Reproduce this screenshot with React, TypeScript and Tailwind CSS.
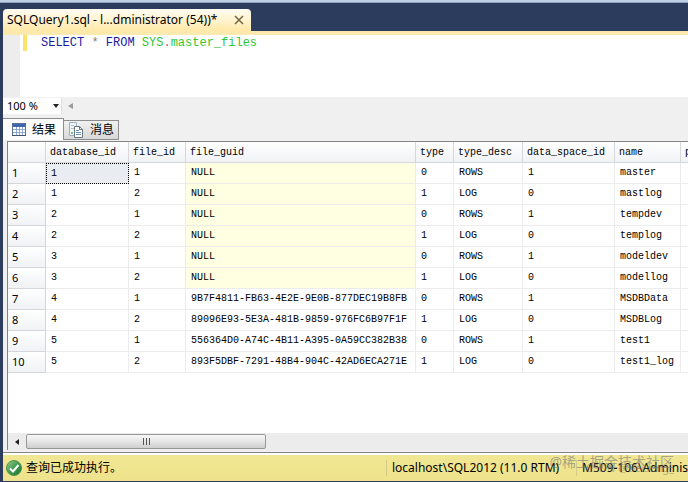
import React, { useState } from 'react';

interface FileRow {
  databaseId: number;
  fileId: number;
  guid: string | null;
  type: number;
  typeDesc: string;
  dataSpaceId: number;
  name: string;
}

const rows: FileRow[] = [
  { databaseId: 1, fileId: 1, guid: null, type: 0, typeDesc: 'ROWS', dataSpaceId: 1, name: 'master' },
  { databaseId: 1, fileId: 2, guid: null, type: 1, typeDesc: 'LOG', dataSpaceId: 0, name: 'mastlog' },
  { databaseId: 2, fileId: 1, guid: null, type: 0, typeDesc: 'ROWS', dataSpaceId: 1, name: 'tempdev' },
  { databaseId: 2, fileId: 2, guid: null, type: 1, typeDesc: 'LOG', dataSpaceId: 0, name: 'templog' },
  { databaseId: 3, fileId: 1, guid: null, type: 0, typeDesc: 'ROWS', dataSpaceId: 1, name: 'modeldev' },
  { databaseId: 3, fileId: 2, guid: null, type: 1, typeDesc: 'LOG', dataSpaceId: 0, name: 'modellog' },
  { databaseId: 4, fileId: 1, guid: '9B7F4811-FB63-4E2E-9E0B-877DEC19B8FB', type: 0, typeDesc: 'ROWS', dataSpaceId: 1, name: 'MSDBData' },
  { databaseId: 4, fileId: 2, guid: '89096E93-5E3A-481B-9859-976FC6B97F1F', type: 1, typeDesc: 'LOG', dataSpaceId: 0, name: 'MSDBLog' },
  { databaseId: 5, fileId: 1, guid: '556364D0-A74C-4B11-A395-0A59CC382B38', type: 0, typeDesc: 'ROWS', dataSpaceId: 1, name: 'test1' },
  { databaseId: 5, fileId: 2, guid: '893F5DBF-7291-48B4-904C-42AD6ECA271E', type: 1, typeDesc: 'LOG', dataSpaceId: 0, name: 'test1_log' },
];

const columns = [
  { label: 'database_id', width: 'w-[83px]' },
  { label: 'file_id', width: 'w-[57px]' },
  { label: 'file_guid', width: 'w-[230px]' },
  { label: 'type', width: 'w-[38px]' },
  { label: 'type_desc', width: 'w-[69px]' },
  { label: 'data_space_id', width: 'w-[92px]' },
  { label: 'name', width: 'w-[66px]' },
  { label: 'physical_name', width: 'w-[240px]' },
];

const cell = 'border-r border-b border-[#ececec] p-0 pl-[5px]';

const GridIcon = () => (
  <svg width="14" height="14" viewBox="0 0 14 14" aria-hidden="true">
    <rect x="0.5" y="0.5" width="13" height="12" fill="#fff" stroke="#5b7292" />
    <rect x="1" y="1" width="12" height="3" fill="#3c66b4" />
    <path d="M1 6.5h12M1 9.5h12M4.5 4v8M7.5 4v8M10.5 4v8" stroke="#8fa6cd" />
    <path d="M0 12.5h14" stroke="#3d5479" />
  </svg>
);

const MessagesIcon = () => (
  <svg width="15" height="16" viewBox="0 0 15 16" aria-hidden="true">
    <path d="M0.5 0.5h7v13h-7z" fill="#eef3f5" stroke="#9fb0bc" />
    <path d="M2 3.5h3M2 6.5h3" stroke="#a9bcc8" />
    <circle cx="3" cy="11" r="1" fill="#64a36e" />
    <path d="M5.5 4.5h5l3 3v8h-8z" fill="#fff" stroke="#68757f" />
    <path d="M10.5 4.5v3h3" fill="none" stroke="#68757f" />
    <path d="M7 8.5h3M7 10.5h5M7 12.5h5" stroke="#6e94b4" />
  </svg>
);

const SuccessIcon = () => (
  <svg width="16" height="16" viewBox="0 0 16 16" aria-hidden="true">
    <defs>
      <linearGradient id="ok" x1="0" y1="0" x2="1" y2="1">
        <stop offset="0" stopColor="#a3cfa0" />
        <stop offset="0.5" stopColor="#409a49" />
        <stop offset="1" stopColor="#1d7431" />
      </linearGradient>
    </defs>
    <circle cx="8" cy="8" r="7.5" fill="url(#ok)" stroke="#4e9358" />
    <path d="M4 8.5l3 3 5.5-6.5" fill="none" stroke="#fff" strokeWidth="2" />
  </svg>
);

export default function App() {
  const [query, setQuery] = useState('SELECT * FROM SYS.master_files');
  const [tab, setTab] = useState<'results' | 'messages'>('results');

  return (
    <div className="flex h-screen flex-col overflow-hidden bg-[#2c3c5c] font-['Noto_Sans','Noto_Sans_CJK_SC',sans-serif] text-xs text-black">
      <div className="h-[3px] shrink-0 border-b border-[#8da2b8] bg-[#bdd0e6]" />

      <div className="flex h-7 shrink-0 items-end pl-[3px]">
        <div className="flex h-[22px] w-[248px] items-center justify-between rounded-t-sm bg-linear-to-b from-[#fffcf2] via-[#fff3cf] to-[#ffe8a6] pr-[6px] pl-1">
          <span className="whitespace-nowrap">SQLQuery1.sql - l...dministrator (54))*</span>
          <button type="button" aria-label="Close" className="flex items-center">
            <svg width="12" height="10" viewBox="0 0 12 10">
              <path d="M2 1l8 8M10 1l-8 8" stroke="#75643f" strokeWidth="1.5" />
            </svg>
          </button>
        </div>
      </div>

      <div className="ml-[3px] flex min-h-0 flex-1 flex-col bg-[#f0f0f0]">
        <div className="h-1 shrink-0 bg-[#fbe9ae]" />

        <div className="flex h-[62px] shrink-0 bg-white">
          <div className="w-[17px] bg-[#ededed]" />
          <div className="ml-[3px] h-4 w-1 bg-[#f9e36a]" />
          <div className="relative ml-[14px] h-4 flex-1 font-['Liberation_Mono',monospace] text-xs leading-4">
            <div aria-hidden="true" className="whitespace-pre">
              <span className="text-[#1a1a9c]">SELECT</span>
              <span className="text-[#808080]"> * </span>
              <span className="text-[#1a1a9c]">FROM</span>
              <span className="text-[#35c535]"> SYS</span>
              <span className="text-[#808080]">.</span>
              <span className="text-[#35c535]">master_files</span>
            </div>
            <input
              aria-label="Query"
              value={query}
              spellCheck={false}
              onChange={(e) => setQuery(e.target.value)}
              className="absolute inset-0 w-full bg-transparent text-transparent caret-black outline-none"
            />
          </div>
        </div>

        <div className="flex h-[17px] shrink-0 items-center">
          <div className="relative h-4 w-[59px] border-r border-[#dedede] bg-white">
            <select aria-label="Zoom" className="h-4 w-full appearance-none pl-1 text-[11px] leading-4 outline-none">
              <option>100 %</option>
              <option>150 %</option>
            </select>
            <svg className="pointer-events-none absolute top-[6px] right-[2px]" width="6" height="4" viewBox="0 0 6 4">
              <path d="M0 0h6L3 4z" fill="#222" />
            </svg>
          </div>
          <button type="button" aria-label="Scroll editor left" className="ml-[6px]">
            <svg width="5" height="6" viewBox="0 0 5 6">
              <path d="M5 0v6L0 3z" fill="#9a9a9a" />
            </svg>
          </button>
        </div>

        <div role="tablist" className="mt-1 flex h-[22px] shrink-0 items-end">
          <button
            type="button"
            role="tab"
            aria-selected={tab === 'results'}
            onClick={() => setTab('results')}
            className="flex h-[22px] w-[61px] items-center gap-[6px] border-t border-r border-[#8d8d8d] bg-[#fbfbfb] pl-[9px] whitespace-nowrap"
          >
            <GridIcon />
            结果
          </button>
          <button
            type="button"
            role="tab"
            aria-selected={tab === 'messages'}
            onClick={() => setTab('messages')}
            className="flex h-5 w-[55px] items-center gap-[6px] border-t border-r border-b border-[#8d8d8d] bg-linear-to-b from-[#f1f1f1] to-[#d8d8d8] pl-[5px] whitespace-nowrap"
          >
            <MessagesIcon />
            消息
          </button>
        </div>

        <div className="mt-px ml-1 flex min-h-0 flex-1 flex-col border-t border-l border-[#858585] bg-white">
          <div className="min-h-0 flex-1 overflow-hidden">
            <table className="w-[913px] table-fixed border-separate border-spacing-0 text-left font-['Liberation_Mono',monospace] text-[10px] leading-3">
              <thead>
                <tr className="h-[21px]">
                  <th className="w-[38px] border-r border-b border-[#d5d7da] bg-linear-to-b from-white to-[#f0f2f5] p-0" />
                  {columns.map((column) => (
                    <th
                      key={column.label}
                      className={`${column.width} border-r border-b border-[#d5d7da] bg-linear-to-b from-white to-[#f0f2f5] p-0 pt-[2px] pl-1 font-normal`}
                    >
                      {column.label}
                    </th>
                  ))}
                </tr>
              </thead>
              <tbody>
                {rows.map((row, i) => (
                  <tr key={row.name} className="h-[21px]">
                    <th className="border-r border-b border-[#d5d7da] bg-linear-to-b from-white to-[#f0f2f5] p-0 pl-1 font-['Noto_Sans',sans-serif] text-[11px] font-normal">
                      {i + 1}
                    </th>
                    <td className={i === 0 ? 'border border-dotted border-black bg-[#e9edf2] p-0 pl-1' : cell}>
                      {row.databaseId}
                    </td>
                    <td className={cell}>{row.fileId}</td>
                    <td className={row.guid === null ? `${cell} bg-[#ffffe1]` : cell}>{row.guid ?? 'NULL'}</td>
                    <td className={cell}>{row.type}</td>
                    <td className={cell}>{row.typeDesc}</td>
                    <td className={cell}>{row.dataSpaceId}</td>
                    <td className={cell}>{row.name}</td>
                    <td className={cell} />
                  </tr>
                ))}
              </tbody>
            </table>
          </div>

          <div className="flex h-[17px] shrink-0 items-center bg-[#ececec]">
            <button type="button" aria-label="Scroll left" className="flex w-[18px] justify-center">
              <svg width="4" height="6" viewBox="0 0 4 6">
                <path d="M4 0v6L0 3z" fill="#222" />
              </svg>
            </button>
            <div className="flex h-[15px] w-[240px] items-center justify-center rounded-xs border border-[#979797] bg-linear-to-b from-[#f7f7f7] via-[#e6e6e6] to-[#cfcfcf]">
              <svg width="9" height="7" viewBox="0 0 9 7">
                <path d="M1.5 0v7M4.5 0v7M7.5 0v7" stroke="#555" />
              </svg>
            </div>
          </div>
        </div>

        <div className="h-[5px] shrink-0 border-b-2 border-b-white pt-[2px]">
          <div className="h-px bg-[#858585]" />
        </div>

        <div className="relative flex h-[26px] shrink-0 items-center bg-linear-to-b from-[#f1e793] to-[#eee38b] pl-[3px] whitespace-nowrap">
          <SuccessIcon />
          <span className="ml-1 flex-1">查询已成功执行。</span>
          <span className="flex h-4 w-[190px] items-center border-l border-[#d3ca88] pl-[5px]">localhost\SQL2012 (11.0 RTM)</span>
          <span className="flex h-4 w-28 items-center overflow-hidden border-l border-[#d3ca88] pl-[5px]">M509-106\Administrator</span>
          <div className="pointer-events-none absolute right-[14px] bottom-[9px] text-sm leading-5 text-[#777777]/60">
            @稀土掘金技术社区
          </div>
          <div className="pointer-events-none absolute right-[14px] bottom-[5px] text-[11px] leading-4 text-[#777777]/50">
            CSDN @Beiseng_
          </div>
        </div>
        <div className="h-px shrink-0 bg-[#2c3c5c]" />
      </div>
    </div>
  );
}
